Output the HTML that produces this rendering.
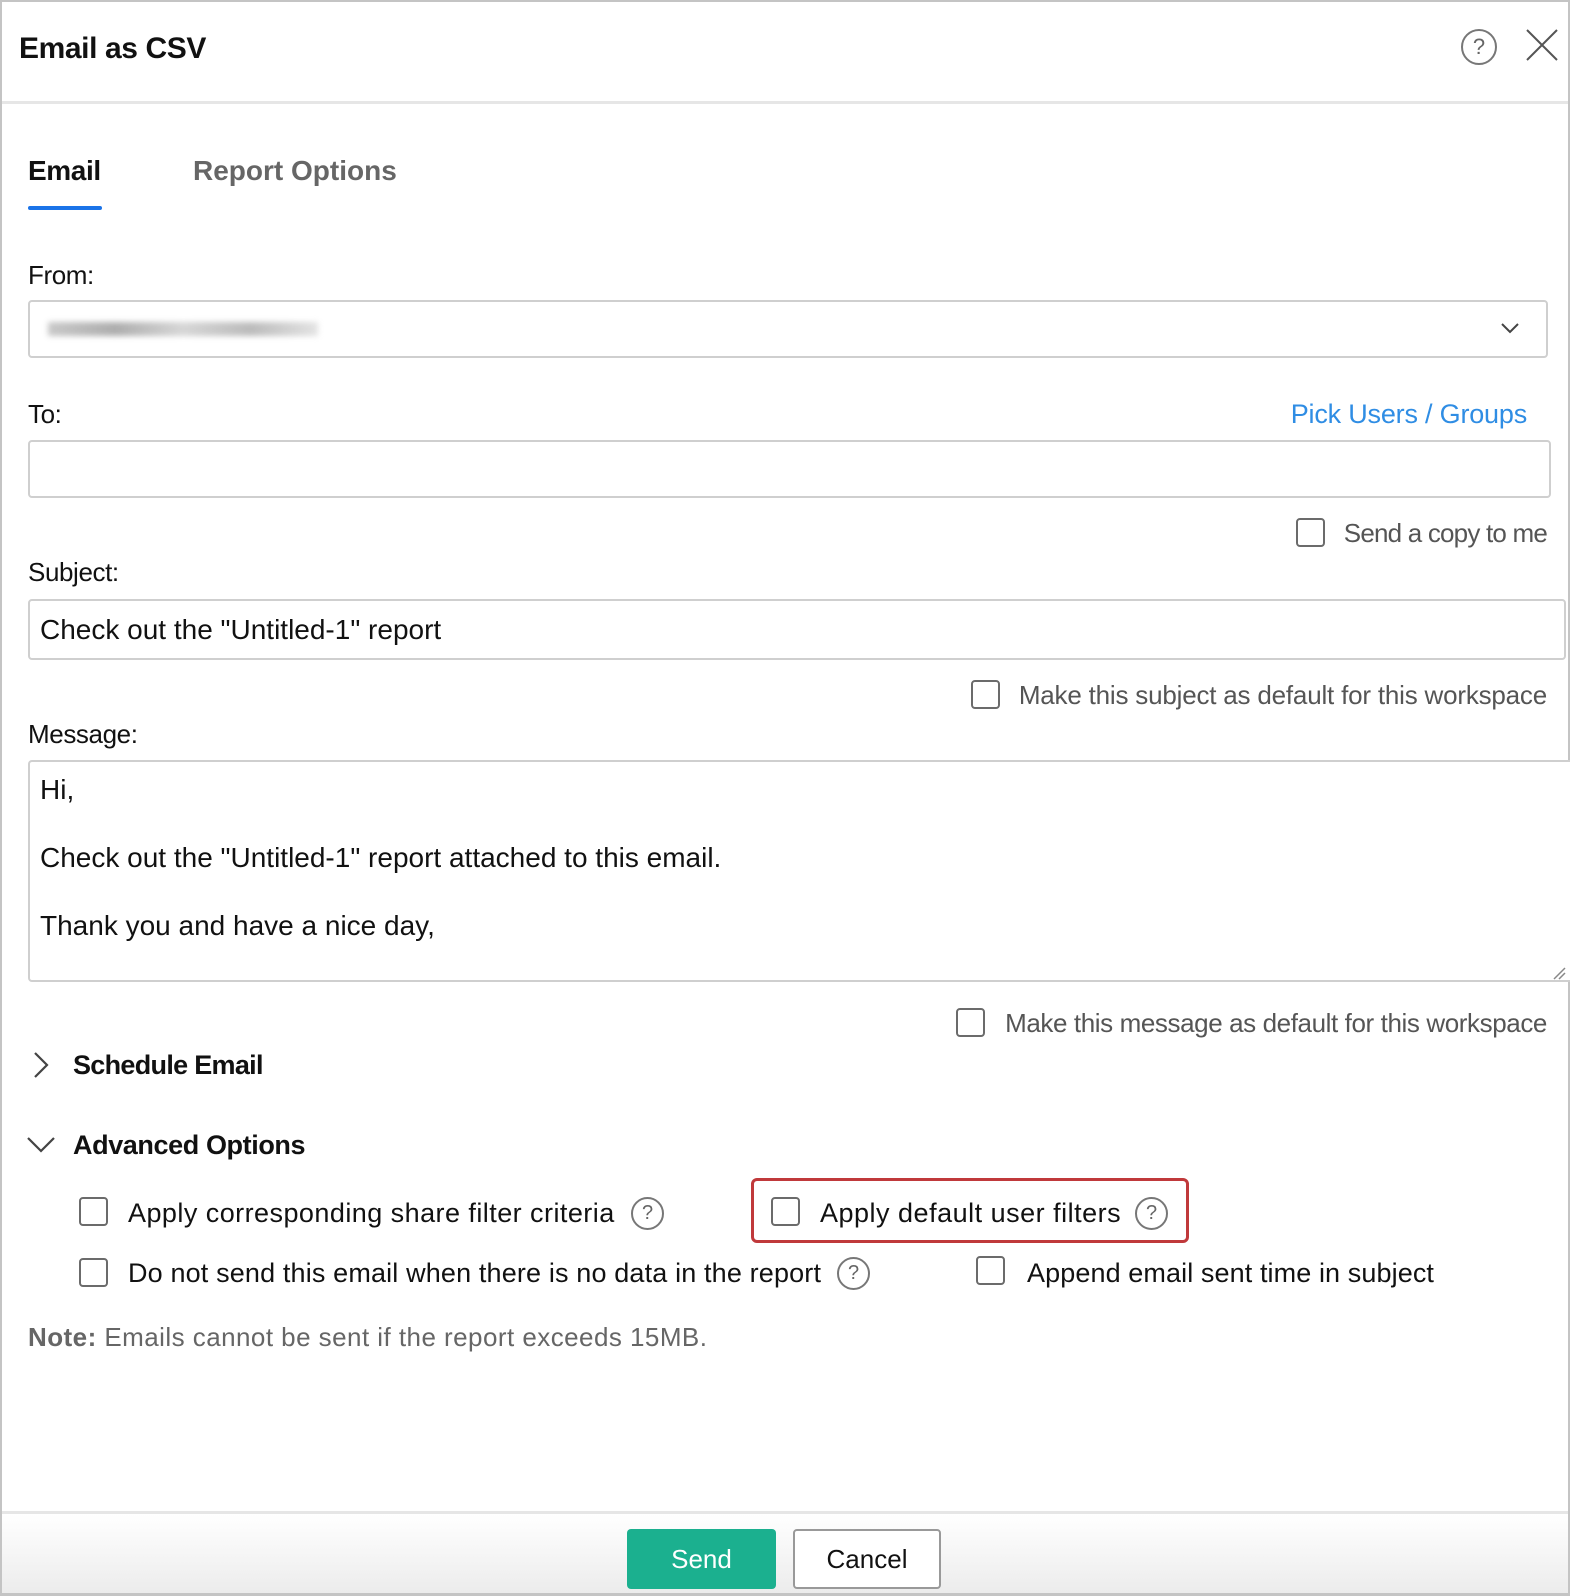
<!DOCTYPE html>
<html><head><meta charset="utf-8"><style>
*{box-sizing:border-box;margin:0;padding:0}
body{width:1570px;height:1596px;position:relative;overflow:hidden;background:#fff;font-family:"Liberation Sans",sans-serif;color:#111;font-size:26px;letter-spacing:-0.4px}
.a{position:absolute;white-space:nowrap;line-height:1}
.cb{position:absolute;width:29px;height:29px;border:2px solid #6b6b6b;border-radius:4px;background:#fff}
.box{position:absolute;border:2px solid #cfcfcf;border-radius:4px;background:#fff}
.gray{color:#555}
.b{font-weight:bold}
.m{font-size:28px;letter-spacing:0}
.help{position:absolute;width:33px;height:33px;border:2px solid #777;border-radius:50%;color:#666;font-size:20px;text-align:center;line-height:29px;letter-spacing:0}
</style></head><body>
<div style="position:absolute;left:0;top:0;width:1570px;height:1596px;border:2px solid #c4c4c4;border-bottom-width:3px"></div>
<div class="a b" style="left:19px;top:34px;font-size:30px">Email as CSV</div>
<div class="help" style="left:1461px;top:29px;width:36px;height:36px;line-height:32px;font-size:22px">?</div>
<svg class="a" style="left:1525px;top:28px" width="34" height="34"><path d="M2 2L32 32M32 2L2 32" stroke="#555" stroke-width="2"/></svg>
<div style="position:absolute;left:2px;top:101px;width:1566px;height:3px;background:#e6e6e6"></div>

<div class="a b" style="left:28px;top:157px;font-size:28px">Email</div>
<div style="position:absolute;left:28px;top:206px;width:74px;height:4px;background:#1a73e8;border-radius:2px"></div>
<div class="a b" style="left:193px;top:157px;font-size:28px;color:#666;letter-spacing:0">Report Options</div>

<div class="a" style="left:28px;top:262px">From:</div>
<div class="box" style="left:28px;top:300px;width:1520px;height:58px"></div>
<div style="position:absolute;left:48px;top:322px;width:270px;height:14px;background:linear-gradient(90deg,#bbb,#999,#ccc,#aaa,#ddd);filter:blur(3px);opacity:.8"></div>
<svg class="a" style="left:1500px;top:322px" width="20" height="12"><path d="M2 2L10 10L18 2" stroke="#444" stroke-width="2" fill="none"/></svg>

<div class="a" style="left:28px;top:401px">To:</div>
<div class="a" style="right:43px;top:401px;color:#2f8de4;font-size:27px;letter-spacing:-0.2px">Pick Users / Groups</div>
<div class="box" style="left:28px;top:440px;width:1523px;height:58px"></div>

<div class="cb" style="left:1296px;top:518px"></div>
<div class="a gray" style="right:23px;top:520px;letter-spacing:-0.8px">Send a copy to me</div>

<div class="a" style="left:28px;top:559px">Subject:</div>
<div class="box" style="left:28px;top:599px;width:1538px;height:61px"></div>
<div class="a m" style="left:40px;top:616px">Check out the "Untitled-1" report</div>

<div class="cb" style="left:971px;top:680px"></div>
<div class="a gray" style="right:23px;top:682px;letter-spacing:-0.2px">Make this subject as default for this workspace</div>

<div class="a" style="left:28px;top:721px">Message:</div>
<div class="box" style="left:28px;top:760px;width:1550px;height:222px"></div>
<div class="a m" style="left:40px;top:776px">Hi,</div>
<div class="a m" style="left:40px;top:844px">Check out the "Untitled-1" report attached to this email.</div>
<div class="a m" style="left:40px;top:912px">Thank you and have a nice day,</div>
<svg class="a" style="left:1552px;top:966px" width="14" height="14"><path d="M2 13L13 2M7 13L13 7" stroke="#888" stroke-width="1.5"/></svg>

<div class="cb" style="left:956px;top:1008px"></div>
<div class="a gray" style="right:23px;top:1010px">Make this message as default for this workspace</div>

<svg class="a" style="left:32px;top:1051px" width="18" height="28"><path d="M3 2L15 14L3 26" stroke="#444" stroke-width="2.2" fill="none"/></svg>
<div class="a b" style="left:73px;top:1052px;font-size:27px;letter-spacing:-0.7px">Schedule Email</div>
<svg class="a" style="left:26px;top:1136px" width="30" height="18"><path d="M2 2L15 15L28 2" stroke="#444" stroke-width="2.2" fill="none"/></svg>
<div class="a b" style="left:73px;top:1132px;font-size:27px">Advanced Options</div>

<div class="cb" style="left:79px;top:1197px"></div>
<div class="a" style="left:128px;top:1200px;font-size:27px;letter-spacing:0.45px">Apply corresponding share filter criteria</div>
<div class="help" style="left:631px;top:1197px">?</div>

<div style="position:absolute;left:751px;top:1178px;width:438px;height:65px;border:3px solid #c0393b;border-radius:6px"></div>
<div class="cb" style="left:771px;top:1197px"></div>
<div class="a" style="left:820px;top:1200px;font-size:27px;letter-spacing:0.5px">Apply default user filters</div>
<div class="help" style="left:1135px;top:1197px">?</div>

<div class="cb" style="left:79px;top:1258px"></div>
<div class="a" style="left:128px;top:1260px;font-size:27px;letter-spacing:0.15px">Do not send this email when there is no data in the report</div>
<div class="help" style="left:837px;top:1257px">?</div>
<div class="cb" style="left:976px;top:1256px"></div>
<div class="a" style="left:1027px;top:1260px;font-size:27px;letter-spacing:0.1px">Append email sent time in subject</div>

<div class="a" style="left:28px;top:1324px;color:#666;letter-spacing:0.45px"><b>Note:</b> Emails cannot be sent if the report exceeds 15MB.</div>

<div style="position:absolute;left:2px;top:1511px;width:1566px;height:3px;background:#e6e6e6"></div>
<div style="position:absolute;left:2px;top:1514px;width:1566px;height:79px;background:linear-gradient(#fff,#ececec)"></div>
<div style="position:absolute;left:627px;top:1529px;width:149px;height:60px;background:#1bb08f;border-radius:4px;color:#fff;text-align:center;line-height:60px;font-size:26px;letter-spacing:0">Send</div>
<div style="position:absolute;left:793px;top:1529px;width:148px;height:60px;background:#fff;border:2px solid #999;border-radius:4px;color:#111;text-align:center;line-height:56px;font-size:26px;letter-spacing:0">Cancel</div>
</body></html>
